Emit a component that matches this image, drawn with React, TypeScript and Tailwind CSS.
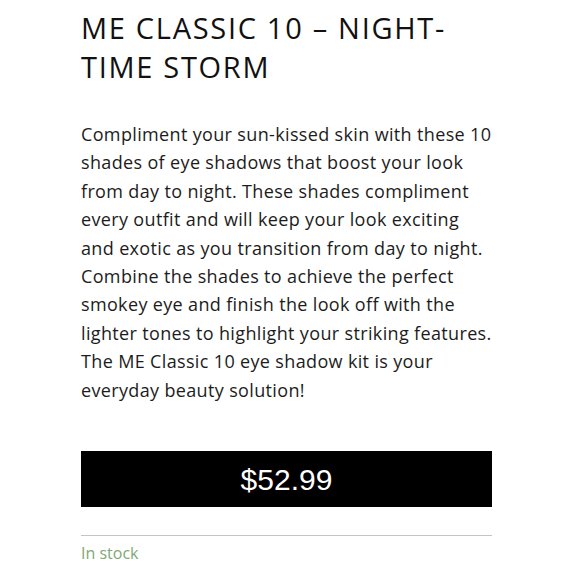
import React from "react";

const TITLE_LINES = ["ME CLASSIC 10 – NIGHT-", "TIME STORM"];

const DESCRIPTION_LINES = [
  "Compliment your sun-kissed skin with these 10",
  "shades of eye shadows that boost your look",
  "from day to night. These shades compliment",
  "every outfit and will keep your look exciting",
  "and exotic as you transition from day to night.",
  "Combine the shades to achieve the perfect",
  "smokey eye and finish the look off with the",
  "lighter tones to highlight your striking features.",
  "The ME Classic 10 eye shadow kit is your",
  "everyday beauty solution!",
];

const App: React.FC = () => {
  return (
    <div className="min-h-screen bg-white" style={{ fontFamily: "'Open Sans', 'Noto Sans', sans-serif" }}>
      <div className="w-[411px] ml-[81px] pt-[8px]">
        {/* Title */}
        <h1 className="text-[29px] leading-[39px] font-normal text-[#111] tracking-[1.7px] whitespace-nowrap">
          {TITLE_LINES.map((l) => (
            <div key={l}>{l}</div>
          ))}
        </h1>

        {/* Description */}
        <div className="mt-[34px] text-[18px] leading-[28.4px] tracking-[0.35px] text-[#1c1c1c] whitespace-nowrap">
          {DESCRIPTION_LINES.map((l) => (
            <div key={l}>{l}</div>
          ))}
        </div>

        {/* Price bar */}
        <div className="mt-[47px] h-[56px] bg-black flex items-center justify-center">
          <span
            className="text-white text-[30px]"
            style={{ fontFamily: "'Liberation Sans', Arial, sans-serif" }}
          >
            $52.99
          </span>
        </div>

        {/* Stock */}
        <div className="mt-[28px] border-t border-[#c4c4c4] pt-[5px]">
          <span className="text-[16px] text-[#82a875]">In stock</span>
        </div>
      </div>
    </div>
  );
};

export default App;
